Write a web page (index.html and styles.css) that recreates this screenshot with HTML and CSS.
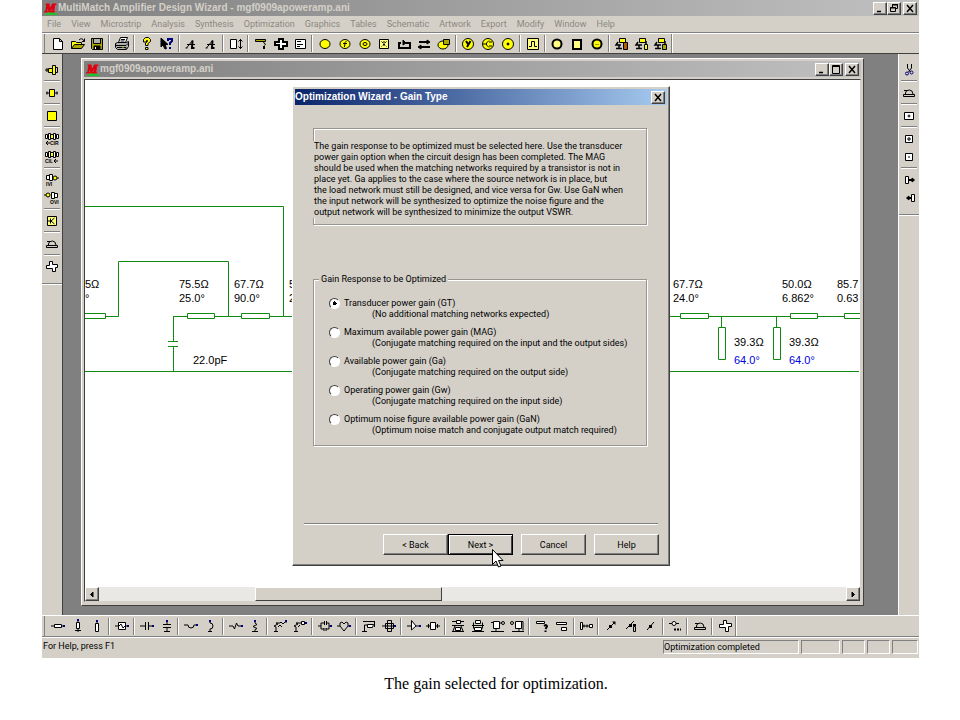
FILE: index.html
```
<!DOCTYPE html>
<html lang="en">
<head>
    <meta charset="UTF-8">
    <meta name="viewport" content="width=device-width, initial-scale=1.0">
    <title>MultiMatch Amplifier Design Wizard</title>
    <link rel="stylesheet" href="styles.css">
</head>
<body>
    <div class="app">
        <header class="titlebar">
            <svg class="logo" viewBox="0 0 14 13"><path class="hill" d="M1 13 Q7 5 14 13z"/><text x="1" y="10">M</text></svg>
            <h1>MultiMatch Amplifier Design Wizard - mgf0909apoweramp.ani</h1>
            <div class="window-buttons">
                <button aria-label="Minimize"><svg viewBox="0 0 10 9"><path d="M2 7.5h4" class="thick"/></svg></button>
                <button aria-label="Restore"><svg viewBox="0 0 10 9"><path d="M3.5 3V.5h5v4H7M3 1h6M1.5 3.5h5v4h-5zM1 4h6"/></svg></button>
                <button aria-label="Close" class="close"><svg viewBox="0 0 10 9"><path d="M2 1l6 7M8 1L2 8" class="thick"/></svg></button>
            </div>
        </header>

        <nav class="menubar">
            <button>File</button>
            <button>View</button>
            <button>Microstrip</button>
            <button>Analysis</button>
            <button>Synthesis</button>
            <button>Optimization</button>
            <button>Graphics</button>
            <button>Tables</button>
            <button>Schematic</button>
            <button>Artwork</button>
            <button>Export</button>
            <button>Modify</button>
            <button>Window</button>
            <button>Help</button>
        </nav>

        <!-- Main toolbar -->
        <div class="toolbar toolbar-top">
            <div class="tools tools-main">
                <button aria-label="New"><svg viewBox="0 0 16 14"><path class="w" d="M3.5 1.5h6l3 3v8h-9zM9.5 1.5v3h3"/></svg></button>
                <button aria-label="Open"><svg viewBox="0 0 16 14"><path class="y" d="M1.5 11.5v-7h4l1 1h5v2"/><path class="o" d="M1.5 11.5l3-4h10l-3 4z"/><path d="M9 3q3-3 5 1M14.5 1.5v3h-2.5"/></svg></button>
                <button aria-label="Save"><svg viewBox="0 0 16 14"><path class="o" d="M2.5 1.5h11v11h-10l-1-1z"/><path class="g" d="M4.5 1.5h7v5h-7z"/><path class="k" d="M5 9h6v3H5z"/><path stroke="#fff" d="M6.5 10v2"/></svg></button>
                <i class="sep"></i>
                <button aria-label="Print"><svg viewBox="0 0 16 14"><path class="w" d="M4.5 5.5l2-5h7l-2 5z"/><path d="M7 2.5h4M6.5 4h4"/><path class="g" d="M1.5 6.5l2-1h9l2-1v5l-2 3h-9l-2-2z"/><path d="M2 8.5h10l2-2M3 10.5h9v2"/><path stroke="#cc0" d="M8 10h2"/></svg></button>
                <i class="sep"></i>
                <button aria-label="Help topics"><svg viewBox="0 0 16 14"><path class="y" d="M4.5 5V2.5l2-2h3l2 2v2l-2.5 2v2H6.5V6l2-1.5v-1h-1V5zM6.5 10.5h2.5v2H6.5z"/></svg></button>
                <button aria-label="Context help"><svg viewBox="0 0 16 14"><path class="k" d="M2 1v9l2-2 2 4 1.5-.5L6 7.5h3z"/><path stroke="#000080" stroke-width="2" d="M9 4V2h4v2l-2 2v2M11 10v2"/></svg></button>
                <i class="sep"></i>
                <button aria-label="Analyze"><svg viewBox="0 0 16 14"><path d="M3.5 11l6-7.5M4 7.5h8M2.5 11h2"/><path stroke-width="2" d="M9.5 3.5L9 11h2.5"/></svg></button>
                <button aria-label="Analyze again"><svg viewBox="0 0 16 14"><path d="M3.5 11l6-7.5M4 7.5h8M2.5 11h2"/><path stroke-width="2" d="M9.5 3.5L9 11h2.5"/></svg></button>
                <i class="sep"></i>
                <button aria-label="Scale height"><svg viewBox="0 0 16 14"><path class="w" d="M2.5 2.5h6v9h-6z"/><path d="M12.5 2v10M10.5 4.5l2-2 2 2M10.5 9.5l2 2 2-2"/></svg></button>
                <i class="sep"></i>
                <button aria-label="Bend"><svg viewBox="0 0 16 14"><path class="o" d="M2.5 2.5h10v2h-10zM10 4.5l2.5 3-1 1"/><path stroke-width="2" d="M11 9v3"/></svg></button>
                <button aria-label="Cross"><svg viewBox="0 0 16 14"><path stroke-width="2" class="w" d="M6 2h4v3h4v4h-4v3H6V8H2V5h4z"/></svg></button>
                <button aria-label="Report"><svg viewBox="0 0 16 14"><path class="w" d="M3.5 2.5h10v9h-10z"/><path d="M5 4.5h4M5 7.5h6M5 9.5h3"/></svg></button>
                <i class="sep"></i>
                <button aria-label="Source"><svg viewBox="0 0 16 14"><ellipse class="y" cx="8" cy="7" rx="5" ry="4.5"/></svg></button>
                <button aria-label="Frequency"><svg viewBox="0 0 16 14"><ellipse class="y" cx="8" cy="7" rx="5" ry="4.5"/><path d="M9.5 4Q7.5 4 7.5 10M6 6.5h4"/></svg></button>
                <button aria-label="Gain circles"><svg viewBox="0 0 16 14"><ellipse class="y" cx="8" cy="7" rx="5" ry="4.5"/><ellipse cx="8" cy="7" rx="2" ry="1.5"/></svg></button>
                <button aria-label="Table"><svg viewBox="0 0 16 14"><path class="p" d="M3.5 2.5h9v9h-9z"/><path d="M5.5 4.5l5 5M10.5 4.5l-5 5M8 4v6" stroke-dasharray="2 1"/></svg></button>
                <button aria-label="Series"><svg viewBox="0 0 16 14"><path stroke-width="2" d="M5 6H3v5h11V6h-4"/><path class="k" d="M7 3l3 3-3 2z"/></svg></button>
                <button aria-label="Swap"><svg viewBox="0 0 16 14"><path stroke-width="2" d="M3 5h9M4 10h10"/><path class="k" d="M11 3l3 2-3 2zM5 8l-3 2 3 2z"/></svg></button>
                <button aria-label="Copy circle"><svg viewBox="0 0 16 14"><ellipse class="y" cx="7" cy="8" rx="5" ry="4"/><path class="o" d="M7.5 2.5h6v5h-6z"/></svg></button>
                <i class="sep"></i>
                <button aria-label="Y parameters"><svg viewBox="0 0 16 14"><circle class="y" cx="8" cy="7" r="5.5"/><path d="M6 4l2 3M10.5 4L7 10" stroke-width="2"/></svg></button>
                <button aria-label="C parameters"><svg viewBox="0 0 16 14"><circle class="y" cx="8" cy="7" r="5.5"/><path d="M9 3.5L6.5 6v2L9 10.5M3 7h3M9 5h3M9 9h3"/></svg></button>
                <button aria-label="Point"><svg viewBox="0 0 16 14"><circle class="y" cx="8" cy="7" r="5.5"/><circle class="k" cx="8" cy="7" r="1"/></svg></button>
                <i class="sep"></i>
                <button aria-label="Pulse"><svg viewBox="0 0 16 14"><path class="p" d="M2.5 1.5h11v11h-11z"/><path d="M4 9.5h2.5v-5h3v5H12"/></svg></button>
                <i class="sep"></i>
                <button aria-label="Circle"><svg viewBox="0 0 16 14"><circle class="p" stroke-width="2" cx="8" cy="7" r="4.5"/></svg></button>
                <button aria-label="Square"><svg viewBox="0 0 16 14"><path class="p" stroke-width="2" d="M4 3h8v9H4z"/></svg></button>
                <button aria-label="Ring"><svg viewBox="0 0 16 14"><circle class="y" stroke-width="2" cx="8" cy="7" r="4.5"/><path d="M6 7.5h4" stroke="#990"/></svg></button>
                <i class="sep"></i>
                <button aria-label="Lock copper"><svg viewBox="0 0 16 14"><path class="y" d="M5.5 1.5h6v4h-6z"/><path d="M4 5l-2 3h5M2 11.5h6M5 8v3" stroke-width="1.5"/><path class="c" d="M9.5 5.5h4v7h-4z"/></svg></button>
                <button aria-label="Lock layer"><svg viewBox="0 0 16 14"><path class="y" d="M5.5 1.5h6v4h-6z"/><path d="M4 5l-2 3h6M2 11.5h6M5 8v3M12 4v3" stroke-width="1.5"/><path class="y" d="M10.5 7.5h3v5h-3z"/></svg></button>
                <button aria-label="Lock all"><svg viewBox="0 0 16 14"><path class="y" d="M5.5 1.5h6v4h-6z"/><path d="M4 5l-2 3h6M2 11.5h6M5 8v3M12 4v3" stroke-width="1.5"/><path class="o" d="M9.5 7.5h4v5h-4z"/></svg></button>
            </div>
        </div>

        <main class="workspace">
            <div class="sidebar">
                <button aria-label="Input port"><svg viewBox="0 0 16 14"><path d="M1 7h3M3 5v4"/><path class="y" d="M4.5 5.5h4v4h-4zM8.5 2.5h3v9h-3z"/><path d="M12 4.5h1.5v5H12"/></svg></button>
                <i class="sep"></i>
                <button aria-label="Two port"><svg viewBox="0 0 16 14"><path d="M2 7h12M3 5.5v3M13 5.5v3"/><path class="y" d="M5.5 3.5h5v7h-5z"/></svg></button>
                <i class="sep"></i>
                <button aria-label="Block"><svg viewBox="0 0 16 14"><path class="y" d="M3.5 2.5h9v9h-9z"/></svg></button>
                <i class="sep"></i>
                <button aria-label="CIR"><svg viewBox="0 0 16 14"><path class="w" d="M1.5 2.5h2v4h-2zM4.5 1.5h2v6h-2zM9.5 1.5h2v6h-2zM12.5 2.5h2v4h-2z"/><path class="y" d="M6.5 2.5h3v4h-3z"/><path d="M2 11h4M4 9l-2 2 2 2"/><text x="6" y="13">CIR</text></svg></button>
                <button aria-label="CIL"><svg viewBox="0 0 16 14"><path class="w" d="M1.5 2.5h2v4h-2zM4.5 1.5h2v6h-2zM9.5 1.5h2v6h-2zM12.5 2.5h2v4h-2z"/><path class="y" d="M6.5 2.5h3v4h-3z"/><path d="M10 11h4M12 9l-2 2 2 2"/><text x="1" y="13">CIL</text></svg></button>
                <i class="sep"></i>
                <button aria-label="IVI"><svg viewBox="0 0 16 14"><path class="w" d="M2.5 2.5h3v4h-3zM5.5 1.5h3v6h-3z"/><circle class="y" cx="11" cy="5" r="2"/><path d="M13 5h2"/><text x="2" y="13">IVI</text></svg></button>
                <button aria-label="OVI"><svg viewBox="0 0 16 14"><circle class="y" cx="4" cy="4" r="2"/><path class="w" d="M7.5 1.5h3v6h-3zM10.5 2.5h3v4h-3z"/><path d="M0 4h2"/><text x="6" y="13">OVI</text></svg></button>
                <i class="sep"></i>
                <button aria-label="Transistor"><svg viewBox="0 0 16 14"><path class="p" d="M3.5 2.5h9v9h-9z"/><path d="M10.5 4L7 7l3.5 3M6.5 4.5v5M4 7h3"/></svg></button>
                <i class="sep"></i>
                <button aria-label="Iron"><svg viewBox="0 0 16 14"><path d="M2.5 8.5h11v2h-11zM4.5 8V7q0-3 4-3 3 0 3.5 4M3 4.5h3"/></svg></button>
                <i class="sep"></i>
                <button aria-label="Junction"><svg viewBox="0 0 16 14"><path class="w" d="M5.5 1.5h3v3h5v3h-2v4h-3v-3h-6v-3h3z"/></svg></button>
                <i class="end"></i>
            </div>

            <div class="desktop">
                <section class="child-window">
                    <div class="titlebar">
                        <svg class="logo" viewBox="0 0 14 13"><path class="hill" d="M1 13 Q7 5 14 13z"/><text x="1" y="10">M</text></svg>
                        <h2>mgf0909apoweramp.ani</h2>
                        <div class="window-buttons">
                            <button aria-label="Minimize"><svg viewBox="0 0 10 9"><path d="M2 7.5h4" class="thick"/></svg></button>
                            <button aria-label="Maximize"><svg viewBox="0 0 10 9"><path d="M1.5 .5h7v8h-7zM1 1.5h8"/></svg></button>
                            <button aria-label="Close" class="close"><svg viewBox="0 0 10 9"><path d="M2 1l6 7M8 1L2 8" class="thick"/></svg></button>
                        </div>
                    </div>
                    <div class="client">
                        <svg class="schematic">
                            <path d="M0 126.5h198.5v110M33.5 236.5v-55h110v55M0 291.5h774"/>
                            <path d="M20 236.5h13.5M88.5 236.5h14M88.5 236v25.5M83 261.5h10M83 266.5h10M88.5 266.5v25M129.5 236.5h27M184.5 236.5H595M623.5 236.5h82M732.5 236.5h27M636.5 236.5v11M691.5 236.5v11"/>
                            <path d="M-8 233.5h28.5v5H-8zM102.5 233.5h27v5h-27zM156.5 233.5h28v5h-28zM595.5 233.5h28v5h-28zM705.5 233.5h27v5h-27zM759.5 233.5h27v5h-27zM633.5 247.5h7v32h-7zM688.5 247.5h7v32h-7z"/>
                            <text x="0" y="208">5Ω</text><text x="0" y="222">°</text>
                            <text x="94" y="208">75.5Ω</text><text x="94" y="222">25.0°</text>
                            <text x="149" y="208">67.7Ω</text><text x="149" y="222">90.0°</text>
                            <text x="204" y="208">5</text><text x="204" y="222">2</text>
                            <text x="108" y="284">22.0pF</text>
                            <text x="588" y="208">67.7Ω</text><text x="588" y="222">24.0°</text>
                            <text x="697" y="208">50.0Ω</text><text x="697" y="222">6.862°</text>
                            <text x="752" y="208">85.7</text><text x="752" y="222">0.63</text>
                            <text x="649" y="266">39.3Ω</text><text x="649" y="284" class="tuned">64.0°</text>
                            <text x="704" y="266">39.3Ω</text><text x="704" y="284" class="tuned">64.0°</text>
                        </svg>
                        <div class="scrollbar">
                            <button aria-label="Scroll left"><svg viewBox="0 0 10 9"><path class="k" d="M6 2L3.5 4.5 6 7z"/></svg></button>
                            <span class="track-before"></span>
                            <span class="thumb"></span>
                            <span class="track-after"></span>
                            <button aria-label="Scroll right"><svg viewBox="0 0 10 9"><path class="k" d="M4 2l2.5 2.5L4 7z"/></svg></button>
                        </div>
                    </div>
                </section>

                <form class="dialog" onsubmit="return false">
                    <div class="titlebar active">
                        <h2>Optimization Wizard - Gain Type</h2>
                        <div class="window-buttons">
                            <button type="button" aria-label="Close" class="close"><svg viewBox="0 0 10 9"><path d="M2 1l6 7M8 1L2 8" class="thick"/></svg></button>
                        </div>
                    </div>
                    <div class="page">
                        <div class="intro">
                            <p>The gain response to be optimized must be selected here. Use the transducer<br>
                            power gain option when the circuit design has been completed. The MAG<br>
                            should be used when the matching networks required by a transistor is not in<br>
                            place yet. Ga applies to the case where the source network is in place, but<br>
                            the load network must still be designed, and vice versa for Gw. Use GaN when<br>
                            the input network will be synthesized to optimize the noise figure and the<br>
                            output network will be synthesized to minimize the output VSWR.</p>
                        </div>
                        <fieldset class="group">
                            <legend>Gain Response to be Optimized</legend>
                            <label><input type="radio" name="gain" checked><span>Transducer power gain (GT)<small>(No additional matching networks expected)</small></span></label>
                            <label><input type="radio" name="gain"><span>Maximum available power gain (MAG)<small>(Conjugate matching required on the input and the output sides)</small></span></label>
                            <label><input type="radio" name="gain"><span>Available power gain (Ga)<small>(Conjugate matching required on the output side)</small></span></label>
                            <label><input type="radio" name="gain"><span>Operating power gain (Gw)<small>(Conjugate matching required on the input side)</small></span></label>
                            <label><input type="radio" name="gain"><span>Optimum noise figure available power gain (GaN)<small>(Optimum noise match and conjugate output match required)</small></span></label>
                        </fieldset>
                    </div>
                    <div class="actions">
                        <div class="pair">
                            <button type="button">&lt; Back</button>
                            <button type="submit" class="default">Next &gt;</button>
                        </div>
                        <button type="button">Cancel</button>
                        <button type="button">Help</button>
                    </div>
                    <svg class="cursor" viewBox="0 0 12 19"><path d="M.5 .5v15l3.5-3.5 2.5 6 2.5-1-2.5-5.5H11z"/></svg>
                </form>
            </div>

            <div class="sidebar right">
                <button aria-label="Cut"><svg viewBox="0 0 16 14"><path d="M6.5 1v4l3 4M10.5 1v4l-3 4"/><g stroke="#000080"><circle cx="6" cy="10.5" r="1.5"/><circle cx="10.5" cy="9.5" r="1.5"/></g></svg></button>
                <i class="sep"></i>
                <button aria-label="Iron"><svg viewBox="0 0 16 14"><path d="M2.5 8.5h11v2h-11zM4.5 8V7q0-3 4-3 3 0 3.5 4M3 4.5h3"/></svg></button>
                <i class="sep"></i>
                <button aria-label="Via"><svg viewBox="0 0 16 14"><path class="w" d="M3.5 3.5h9v7h-9z"/><circle cx="8" cy="7" r="1"/></svg></button>
                <i class="sep"></i>
                <button aria-label="Zoom in"><svg viewBox="0 0 16 14"><path class="w" d="M4.5 3.5h7v7h-7z"/><path d="M6 7h4M8 5v4"/></svg></button>
                <button aria-label="Zoom out"><svg viewBox="0 0 16 14"><path class="w" d="M4.5 3.5h7v7h-7z"/><path d="M7 7h2"/></svg></button>
                <i class="sep"></i>
                <button aria-label="Shift right"><svg viewBox="0 0 16 14"><path class="w" d="M4.5 3.5h3v7h-3z"/><path stroke-width="2" d="M8 7h4"/><path class="k" d="M11 5l2.5 2L11 9z"/></svg></button>
                <button aria-label="Shift left"><svg viewBox="0 0 16 14"><path class="w" d="M10.5 3.5h3v7h-3z"/><path stroke-width="2" d="M6 7h4"/><path class="k" d="M8 5L5.5 7 8 9z"/></svg></button>
                <i class="end"></i>
            </div>
        </main>

        <!-- Component toolbar -->
        <div class="toolbar toolbar-bottom">
            <div class="tools tools-parts">
                <button aria-label="Line"><svg viewBox="0 0 16 14"><path d="M1 7h14"/><path class="w" d="M4.5 5.5h7v3h-7z"/><path class="n" d="M13 6h2v2h-2z"/></svg></button>
                <button aria-label="Shorted stub"><svg viewBox="0 0 16 14"><path d="M8 1v12M5 11.5h6"/><path class="w" d="M6.5 3.5h3v6h-3z"/><path class="n" d="M7 0h2v2H7z"/></svg></button>
                <button aria-label="Open stub"><svg viewBox="0 0 16 14"><path d="M8 1v3"/><path class="w" d="M6.5 4.5h3v8h-3z"/><path class="n" d="M7 1h2v2H7z"/></svg></button>
                <i class="sep"></i>
                <button aria-label="Block"><svg viewBox="0 0 16 14"><path d="M1 7h14"/><path class="w" d="M4.5 3.5h7v7h-7z"/><path d="M5 7l2-2 2 4 2-2"/><path class="n" d="M13 6h2v2h-2z"/></svg></button>
                <i class="sep"></i>
                <button aria-label="Series capacitor"><svg viewBox="0 0 16 14"><path d="M1 7h5M6.5 3v8M9.5 3v8M10 7h5"/><path class="n" d="M13 6h2v2h-2z"/></svg></button>
                <button aria-label="Shunt capacitor"><svg viewBox="0 0 16 14"><path d="M8 1v4M4 5.5h8M4 8.5h8M8 9v4M5 12.5h6"/><path class="n" d="M7 1h2v2H7z"/></svg></button>
                <i class="sep"></i>
                <button aria-label="Series inductor"><svg viewBox="0 0 16 14"><path d="M1 6h4q0 3 3 3t3-3h4"/><path class="n" d="M13 5h2v2h-2z"/></svg></button>
                <button aria-label="Shunt inductor"><svg viewBox="0 0 16 14"><path d="M7 1v3q3 0 3 3t-3 3v3M5 12.5h4"/><path class="n" d="M6 1h2v2H6z"/></svg></button>
                <i class="sep"></i>
                <button aria-label="Series resistor"><svg viewBox="0 0 16 14"><path d="M1 7h4l1.5 3 2-6 1.5 3h5"/><path class="n" d="M13 6h2v2h-2z"/></svg></button>
                <button aria-label="Shunt resistor"><svg viewBox="0 0 16 14"><path d="M8 1v3l2 1.5-4 2 4 2-2 1v2M5 12.5h6"/><path class="n" d="M7 1h2v2H7z"/></svg></button>
                <i class="sep"></i>
                <button aria-label="Series network"><svg viewBox="0 0 16 14"><path d="M4 12V8L2 7l4-2-2-1h4l1-1 2 2 2-2h2M2 12.5h4M6 8l2-2 2 2"/><path class="n" d="M13 1h2v2h-2z"/></svg></button>
                <button aria-label="Shunt network"><svg viewBox="0 0 16 14"><path d="M4 12V8L2 7l4-2-2-1h10M2 12.5h4M6 8l2-2"/><path class="w" d="M9.5 2.5h3v3h-3z"/><path class="n" d="M13 3h2v2h-2z"/></svg></button>
                <i class="sep"></i>
                <button aria-label="Parallel LC"><svg viewBox="0 0 16 14"><path d="M1 7h3V4h3M9 4h3v6H9M7 10H4V7M7.5 2v4M9.5 2v4M7 9v3M9 9v3M12 7h3"/><path class="n" d="M13 6h2v2h-2z"/></svg></button>
                <button aria-label="Parallel RL"><svg viewBox="0 0 16 14"><path d="M1 7h3V4l2-1 2 2 2-2 2 1v3h3M4 7l4 5 4-5"/><path class="n" d="M13 6h2v2h-2z"/></svg></button>
                <i class="sep"></i>
                <button aria-label="Coupled line"><svg viewBox="0 0 16 14"><path d="M2 2.5h12M13.5 2v6M3.5 12V6h3M1 12.5h5"/><path class="w" d="M6.5 5.5h6l-1 3h-5z"/></svg></button>
                <button aria-label="Transformer"><svg viewBox="0 0 16 14"><path d="M1 7h14M6.5 1.5h4v11h-4zM4.5 4.5h8v5h-8z"/><path class="n" d="M13 6h2v2h-2z"/></svg></button>
                <i class="sep"></i>
                <button aria-label="Device"><svg viewBox="0 0 16 14"><path d="M1 7h14"/><path class="w" d="M5.5 1.5L10 7l-4.5 4z"/><path class="n" d="M13 6h2v2h-2z"/></svg></button>
                <button aria-label="Two port"><svg viewBox="0 0 16 14"><path d="M1 7h14M3.5 5v4M12.5 5v4"/><path class="w" d="M5.5 3.5h5v7h-5z"/></svg></button>
                <i class="sep"></i>
                <button aria-label="Coupler"><svg viewBox="0 0 16 14"><path d="M2 2.5h12M2 6.5h12M2 12.5h12M5 7l-2 5M11 7l2 5"/><path class="w" d="M6.5 1.5h4v3h-4zM5.5 8.5h5v3h-5z"/></svg></button>
                <button aria-label="Feedback"><svg viewBox="0 0 16 14"><path d="M2 6.5h12M2 12.5h12M3.5 3.5v6M12.5 3.5v6"/><path class="w" d="M5.5 1.5h5v3h-5zM4.5 8.5h7v3h-7z"/></svg></button>
                <button aria-label="Source stage"><svg viewBox="0 0 16 14"><path d="M1 12.5h13M6 9v3M1 3.5h3M10 4h2"/><path class="w" d="M3.5 2.5h6v7h-6z"/><circle cx="13" cy="4" r="1.5"/></svg></button>
                <button aria-label="Load stage"><svg viewBox="0 0 16 14"><path d="M3 12.5h12M10 9v3M12 2.5h2v9"/><path class="w" d="M6.5 2.5h6v7h-6z"/><circle cx="3" cy="4" r="1.5"/></svg></button>
                <i class="sep"></i>
                <button aria-label="Query"><svg viewBox="0 0 16 14"><path class="w" d="M2.5 2.5h8v2h-8z"/><path d="M10 7q3-2 3 .5L11.5 10M11.5 11.5v1.5" stroke-width="2"/></svg></button>
                <button aria-label="Step"><svg viewBox="0 0 16 14"><path class="w" d="M2.5 3.5h10v2h-10zM7.5 8.5h5v3h-5z"/></svg></button>
                <i class="sep"></i>
                <button aria-label="Connect"><svg viewBox="0 0 16 14"><path class="w" d="M2.5 3.5h2v7h-2zM11.5 5.5h3v3h-3z"/><path d="M5 7h6M6 5.5v3M9 5.5v3"/></svg></button>
                <i class="sep"></i>
                <button aria-label="Draw line"><svg viewBox="0 0 16 14"><path d="M4 11l8-8"/><path class="k" stroke="none" d="M6 6h3v3H6zM9 2.5h3.5V6z"/></svg></button>
                <button aria-label="Draw branch"><svg viewBox="0 0 16 14"><path d="M3 10l8-8M10.5 7.5h2v5h-2z"/><path class="k" stroke="none" d="M6 5h3v3H6zM10 5h3v2h-3z"/></svg></button>
                <button aria-label="Draw node"><svg viewBox="0 0 16 14"><path d="M4 11l7-8"/><path class="k" stroke="none" d="M6 6h3v3H6z"/></svg></button>
                <i class="sep"></i>
                <button aria-label="More"><svg viewBox="0 0 16 14"><path d="M2 4.5h10"/><circle class="w" cx="7" cy="4.5" r="2"/><path d="M7 10.5h7" stroke-width="2" stroke-dasharray="2 1"/></svg></button>
                <i class="sep"></i>
                <button aria-label="Iron"><svg viewBox="0 0 16 14"><path d="M2.5 8.5h11v2h-11zM4.5 8V7q0-3 4-3 3 0 3.5 4M3 4.5h3"/></svg></button>
                <i class="sep"></i>
                <button aria-label="Junction"><svg viewBox="0 0 16 14"><path class="w" d="M6.5 1.5h3v3h5v3h-3v5h-3v-4h-6v-3h4z"/></svg></button>
            </div>
        </div>

        <footer class="statusbar">
            <span class="hint">For Help, press F1</span>
            <span class="pane message">Optimization completed</span>
            <span class="pane wide"></span>
            <span class="pane"></span>
            <span class="pane"></span>
            <span class="pane last"></span>
        </footer>
    </div>

    <p class="caption">The gain selected for optimization.</p>
</body>
</html>
```
FILE: styles.css
```
:root {
    --face: #d4d0c8;
    --shadow: #808080;
    --dark: #404040;
    --light: #ffffff;
    --ui-font: Roboto, "Liberation Sans", sans-serif;
}

* {
    box-sizing: border-box;
}

body {
    margin: 0;
    background: #fff;
    font-family: var(--ui-font);
    font-size: 9px;
    color: #000;
}

button {
    font: inherit;
    color: inherit;
    padding: 0;
    margin: 0;
    border: 0;
    background: var(--face);
}

svg {
    fill: none;
    stroke: #000;
    display: block;
}

.app {
    margin: 0 41px 0 42px;
    background: var(--face);
    overflow: hidden;
}

/* Title bars */
.titlebar {
    display: flex;
    align-items: center;
    height: 16px;
    padding: 0 2px;
    background: linear-gradient(to right, #808080, #c0c0c0);
    color: var(--face);
}

.titlebar.active {
    background: linear-gradient(to right, #0a246a, #a6caf0);
    color: #fff;
}

.titlebar h1,
.titlebar h2 {
    flex: 1;
    margin: 0;
    font: bold 10px/16px "Liberation Sans", Arial, sans-serif;
    white-space: nowrap;
}

.logo {
    width: 14px;
    height: 13px;
    overflow: visible;
}

.logo text {
    font: italic bold 12px "Liberation Serif", serif;
    fill: #e00010;
    stroke: #e00010;
}

.logo .hill {
    fill: #20c030;
    stroke: none;
}

.window-buttons {
    display: flex;
}

.window-buttons button,
.scrollbar button {
    width: 14px;
    height: 13px;
    border: 1px solid;
    border-color: var(--light) var(--dark) var(--dark) var(--light);
    box-shadow: inset -1px -1px var(--shadow);
}

.window-buttons .close {
    margin-left: 2px;
}

.window-buttons svg,
.scrollbar svg {
    width: 10px;
    height: 9px;
    margin: 0 auto;
}

.thick {
    stroke-width: 1.5;
}

/* Menu */
.menubar {
    display: flex;
    gap: 10px;
    height: 17px;
    padding-left: 5px;
    border-bottom: 1px solid var(--shadow);
    color: #8c8880;
    line-height: 15px;
}

/* Toolbars */
.toolbar {
    height: 21px;
    padding-left: 2px;
    border-top: 1px solid var(--light);
}

.toolbar-top {
    border-bottom: 1px solid var(--dark);
}

.toolbar-bottom {
    height: 22px;
    border-bottom: 1px solid var(--shadow);
}

.tools {
    display: flex;
    align-items: center;
    height: 100%;
    border-left: 1px solid var(--shadow);
    border-right: 1px solid var(--shadow);
    box-shadow: 1px 0 var(--light);
    padding-left: 3px;
}

.tools-main {
    width: 628px;
}

.tools-parts {
    width: 692px;
}

.tools button {
    flex: 1;
}

.tools svg,
.sidebar svg {
    width: 16px;
    height: 14px;
    margin: 0 auto;
}

.tools .sep {
    width: 2px;
    height: 17px;
    margin: 0 2px 0 1px;
    border-left: 1px solid var(--shadow);
    border-right: 1px solid var(--light);
}

.sidebar {
    display: flex;
    flex-direction: column;
    width: 21px;
    padding-top: 7px;
    border-right: 1px solid var(--dark);
}

.sidebar.right {
    border-right: 0;
    border-left: 1px solid var(--light);
}

.sidebar button {
    height: 18px;
}

.sidebar text {
    font: bold 5px "Liberation Sans", sans-serif;
    fill: #000;
    stroke: none;
}

.sidebar .sep,
.sidebar .end {
    height: 2px;
    margin: 1px 2px 2px;
    border-top: 1px solid var(--shadow);
    border-bottom: 1px solid var(--light);
}

.sidebar .end {
    margin: 7px 0 0;
}

.w { fill: #fff; }
.y { fill: #ffff00; }
.p { fill: #ffff80; }
.o { fill: #a8a800; }
.g { fill: #b0b0b0; }
.c { fill: #b06000; }
.k { fill: #000; }
.n { fill: #000080; stroke: none; }

/* Workspace */
.workspace {
    display: flex;
    height: 561px;
}

.desktop {
    position: relative;
    flex: 1;
    min-width: 0;
    padding: 4px 34px 9px 18px;
    background: var(--shadow);
}

.child-window {
    display: flex;
    flex-direction: column;
    height: 100%;
    padding: 2px 2px 3px;
    background: var(--face);
    border: 1px solid;
    border-color: var(--light) var(--dark) var(--dark) var(--light);
}

.client {
    display: flex;
    flex-direction: column;
    flex: 1;
    margin-top: 2px;
    border: 1px solid;
    border-color: var(--dark) var(--face) var(--face) var(--dark);
    background: #fff;
}

.schematic {
    flex: 1;
    width: 100%;
    stroke: #108a10;
    overflow: hidden;
}

.schematic text {
    font: 11px "Liberation Sans", Arial, sans-serif;
    fill: #000;
    stroke: none;
}

.schematic .tuned {
    fill: #0000e0;
}

.scrollbar {
    display: flex;
    height: 14px;
    background: #e9e8e4;
}

.scrollbar button {
    height: 14px;
}

.track-before {
    flex: 156;
}

.thumb {
    flex: 185;
    background: var(--face);
    border: 1px solid;
    border-color: var(--light) var(--dark) var(--dark) var(--light);
}

.track-after {
    flex: 405;
}

/* Wizard dialog */
.dialog {
    position: absolute;
    left: 229px;
    top: 32px;
    width: 378px;
    padding: 2px;
    background: var(--face);
    border: 1px solid;
    border-color: var(--light) var(--dark) var(--dark) var(--light);
    box-shadow: inset -1px -1px var(--shadow);
}

.dialog .titlebar {
    padding-left: 0;
}

.page {
    height: 419px;
    margin: 0 9px;
    padding: 23px 11px 0 9px;
    border-bottom: 1px solid var(--shadow);
    box-shadow: 0 1px var(--light);
}

.intro,
.group {
    border: 1px solid #989590;
    box-shadow: 1px 1px var(--light), inset 1px 1px var(--light);
    line-height: 11px;
}

.intro {
    padding: 12px 0 6px;
}

.intro p {
    margin: 0 0 0 -1px;
    padding-left: 1px;
    background: var(--face);
    white-space: nowrap;
}

.group {
    display: flex;
    flex-direction: column;
    gap: 7px;
    margin: 49px 0 0;
    padding: 13px 15px 9px;
}

.group legend {
    margin-left: -10px;
    padding: 0 2px;
    background: var(--face);
}

.group label {
    display: flex;
    gap: 4px;
    white-space: nowrap;
}

.group input {
    appearance: none;
    width: 11px;
    height: 11px;
    margin: 0;
    border: 1px solid;
    border-color: var(--dark) var(--light) var(--light) var(--dark);
    border-radius: 50%;
    background: #fff;
}

.group input:checked {
    background: radial-gradient(circle, #000 2px, #fff 2px);
}

.group small {
    display: block;
    margin-left: 28px;
    font-size: 9px;
}

.actions {
    display: flex;
    justify-content: flex-end;
    gap: 8px;
    padding: 10px 8px 8px;
}

.pair {
    display: flex;
}

.actions button {
    width: 65px;
    height: 21px;
    border: 1px solid;
    border-color: var(--light) var(--dark) var(--dark) var(--light);
    box-shadow: inset -1px -1px var(--shadow);
}

.actions .default {
    border-color: #000;
    box-shadow: inset 1px 1px var(--light), inset -1px -1px var(--dark);
}

.cursor {
    position: absolute;
    left: 199px;
    top: 462px;
    width: 12px;
    height: 19px;
    fill: #fff;
}

/* Status bar */
.statusbar {
    display: flex;
    gap: 2px;
    height: 21px;
    padding: 2px 1px 4px;
    border-top: 1px solid var(--light);
    line-height: 13px;
}

.hint {
    flex: 1;
}

.pane {
    width: 23px;
    border: 1px solid;
    border-color: var(--shadow) var(--light) var(--light) var(--shadow);
}

.message {
    width: 136px;
    line-height: 12px;
}

.wide {
    width: 39px;
}

.last {
    width: 26px;
}

.caption {
    margin: 16px 0 0 32px;
    text-align: center;
    font: 16px/20px "Liberation Serif", "Times New Roman", serif;
}
```
